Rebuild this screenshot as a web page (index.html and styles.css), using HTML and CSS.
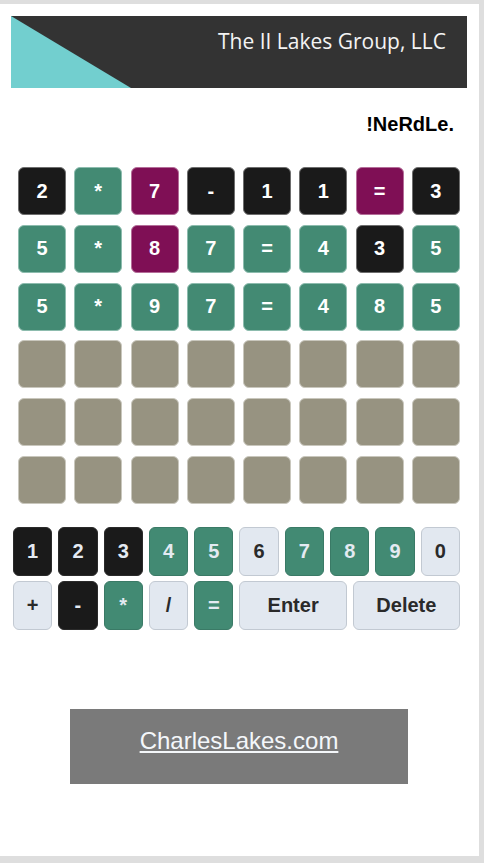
FILE: index.html
```html
<!DOCTYPE html>
<html>
<head>
<meta charset="utf-8">
<link rel="stylesheet" href="styles.css">
</head>
<body>
<div class="page">
  <header class="banner">
    <svg class="wedge" width="120" height="72" viewBox="0 0 120 72"><polygon points="0,0 120,72 0,72" fill="#72cfcf"/></svg>
    <div class="brand">The II Lakes Group, LLC</div>
  </header>
  <h1 class="title">!NeRdLe.</h1>
  <div class="board">
    <div class="tile k">2</div><div class="tile g">*</div><div class="tile p">7</div><div class="tile k">-</div><div class="tile k">1</div><div class="tile k">1</div><div class="tile p">=</div><div class="tile k">3</div>
    <div class="tile g">5</div><div class="tile g">*</div><div class="tile p">8</div><div class="tile g">7</div><div class="tile g">=</div><div class="tile g">4</div><div class="tile k">3</div><div class="tile g">5</div>
    <div class="tile g">5</div><div class="tile g">*</div><div class="tile g">9</div><div class="tile g">7</div><div class="tile g">=</div><div class="tile g">4</div><div class="tile g">8</div><div class="tile g">5</div>
    <div class="tile e"></div><div class="tile e"></div><div class="tile e"></div><div class="tile e"></div><div class="tile e"></div><div class="tile e"></div><div class="tile e"></div><div class="tile e"></div>
    <div class="tile e"></div><div class="tile e"></div><div class="tile e"></div><div class="tile e"></div><div class="tile e"></div><div class="tile e"></div><div class="tile e"></div><div class="tile e"></div>
    <div class="tile e"></div><div class="tile e"></div><div class="tile e"></div><div class="tile e"></div><div class="tile e"></div><div class="tile e"></div><div class="tile e"></div><div class="tile e"></div>
  </div>
  <div class="keyboard">
    <div class="krow">
      <button class="key dark">1</button><button class="key dark">2</button><button class="key dark">3</button><button class="key green">4</button><button class="key green">5</button><button class="key">6</button><button class="key green">7</button><button class="key green">8</button><button class="key green">9</button><button class="key">0</button>
    </div>
    <div class="krow">
      <button class="key">+</button><button class="key dark">-</button><button class="key green">*</button><button class="key">/</button><button class="key green">=</button><button class="key wide">Enter</button><button class="key wide">Delete</button>
    </div>
  </div>
  <div class="footer">
    <a class="site" href="#">CharlesLakes.com</a>
  </div>
</div>
</body>
</html>
```
FILE: styles.css
```css
html, body {
  margin: 0;
  padding: 0;
  background: #dedede;
}
.page {
  width: 479px;
  height: 852px;
  margin-top: 4px;
  background: #ffffff;
  overflow: hidden;
  display: flex;
  flex-direction: column;
}
.banner {
  margin: 12px 12px 0 11px;
  height: 72px;
  background: #333333;
  position: relative;
  display: flex;
  justify-content: flex-end;
  align-items: flex-start;
}
.wedge {
  position: absolute;
  left: 0;
  top: 0;
}
.brand {
  font-family: "Open Sans", sans-serif;
  font-size: 21px;
  color: #f4f4f4;
  padding: 11px 21px 0 0;
  line-height: 28px;
}
.title {
  margin: 0;
  padding: 24px 25px 0 0;
  text-align: right;
  font-family: "Liberation Sans", Arial, sans-serif;
  font-weight: bold;
  font-size: 20px;
  line-height: 24px;
  color: #000;
}
.board {
  margin: 31px 0 0 18px;
  display: grid;
  grid-template-columns: repeat(8, 48px);
  grid-auto-rows: 48px;
  column-gap: 8.25px;
  row-gap: 9.8px;
}
.tile {
  border-radius: 6px;
  display: flex;
  align-items: center;
  justify-content: center;
  font-family: "Liberation Sans", Arial, sans-serif;
  font-weight: bold;
  font-size: 20px;
  color: #ffffff;
  box-sizing: border-box;
}
.tile.k { background: #1a1a1a; border: 1px solid #6e6e6e; }
.tile.g { background: #438a73; border: 1px solid #8dbcae; }
.tile.p { background: #7f0f55; border: 1px solid #b46e99; }
.tile.e { background: #979381; border: 1px solid #c9c7bd; }
.keyboard {
  margin: 23px 0 0 13px;
  width: 447px;
  display: flex;
  flex-direction: column;
  gap: 5px;
}
.krow {
  display: flex;
  gap: 6px;
  height: 49px;
}
.key {
  flex: 0 0 39.3px;
  box-sizing: border-box;
  margin: 0;
  padding: 0;
  border-radius: 6px;
  border: 1.5px solid #c2c9d2;
  background: #e2e8f0;
  color: #2a2a2a;
  font-family: "Liberation Sans", Arial, sans-serif;
  font-weight: bold;
  font-size: 20px;
}
.key.dark {
  background: #1a1a1a;
  border-color: #2a2a2a;
  color: #e4eaf2;
}
.key.green {
  background: #428a73;
  border-color: #3a7a66;
  color: #e4eaf2;
}
.key.wide {
  flex: 1 1 0;
}
.footer {
  margin: 79px 0 0 70px;
  width: 338px;
  height: 75px;
  box-sizing: border-box;
  padding-top: 18px;
  background: #7a7a7a;
  text-align: center;
}
.site {
  font-family: "Liberation Sans", Arial, sans-serif;
  font-size: 24px;
  line-height: 28px;
  color: #f4f7fa;
  text-decoration: underline;
}
```
